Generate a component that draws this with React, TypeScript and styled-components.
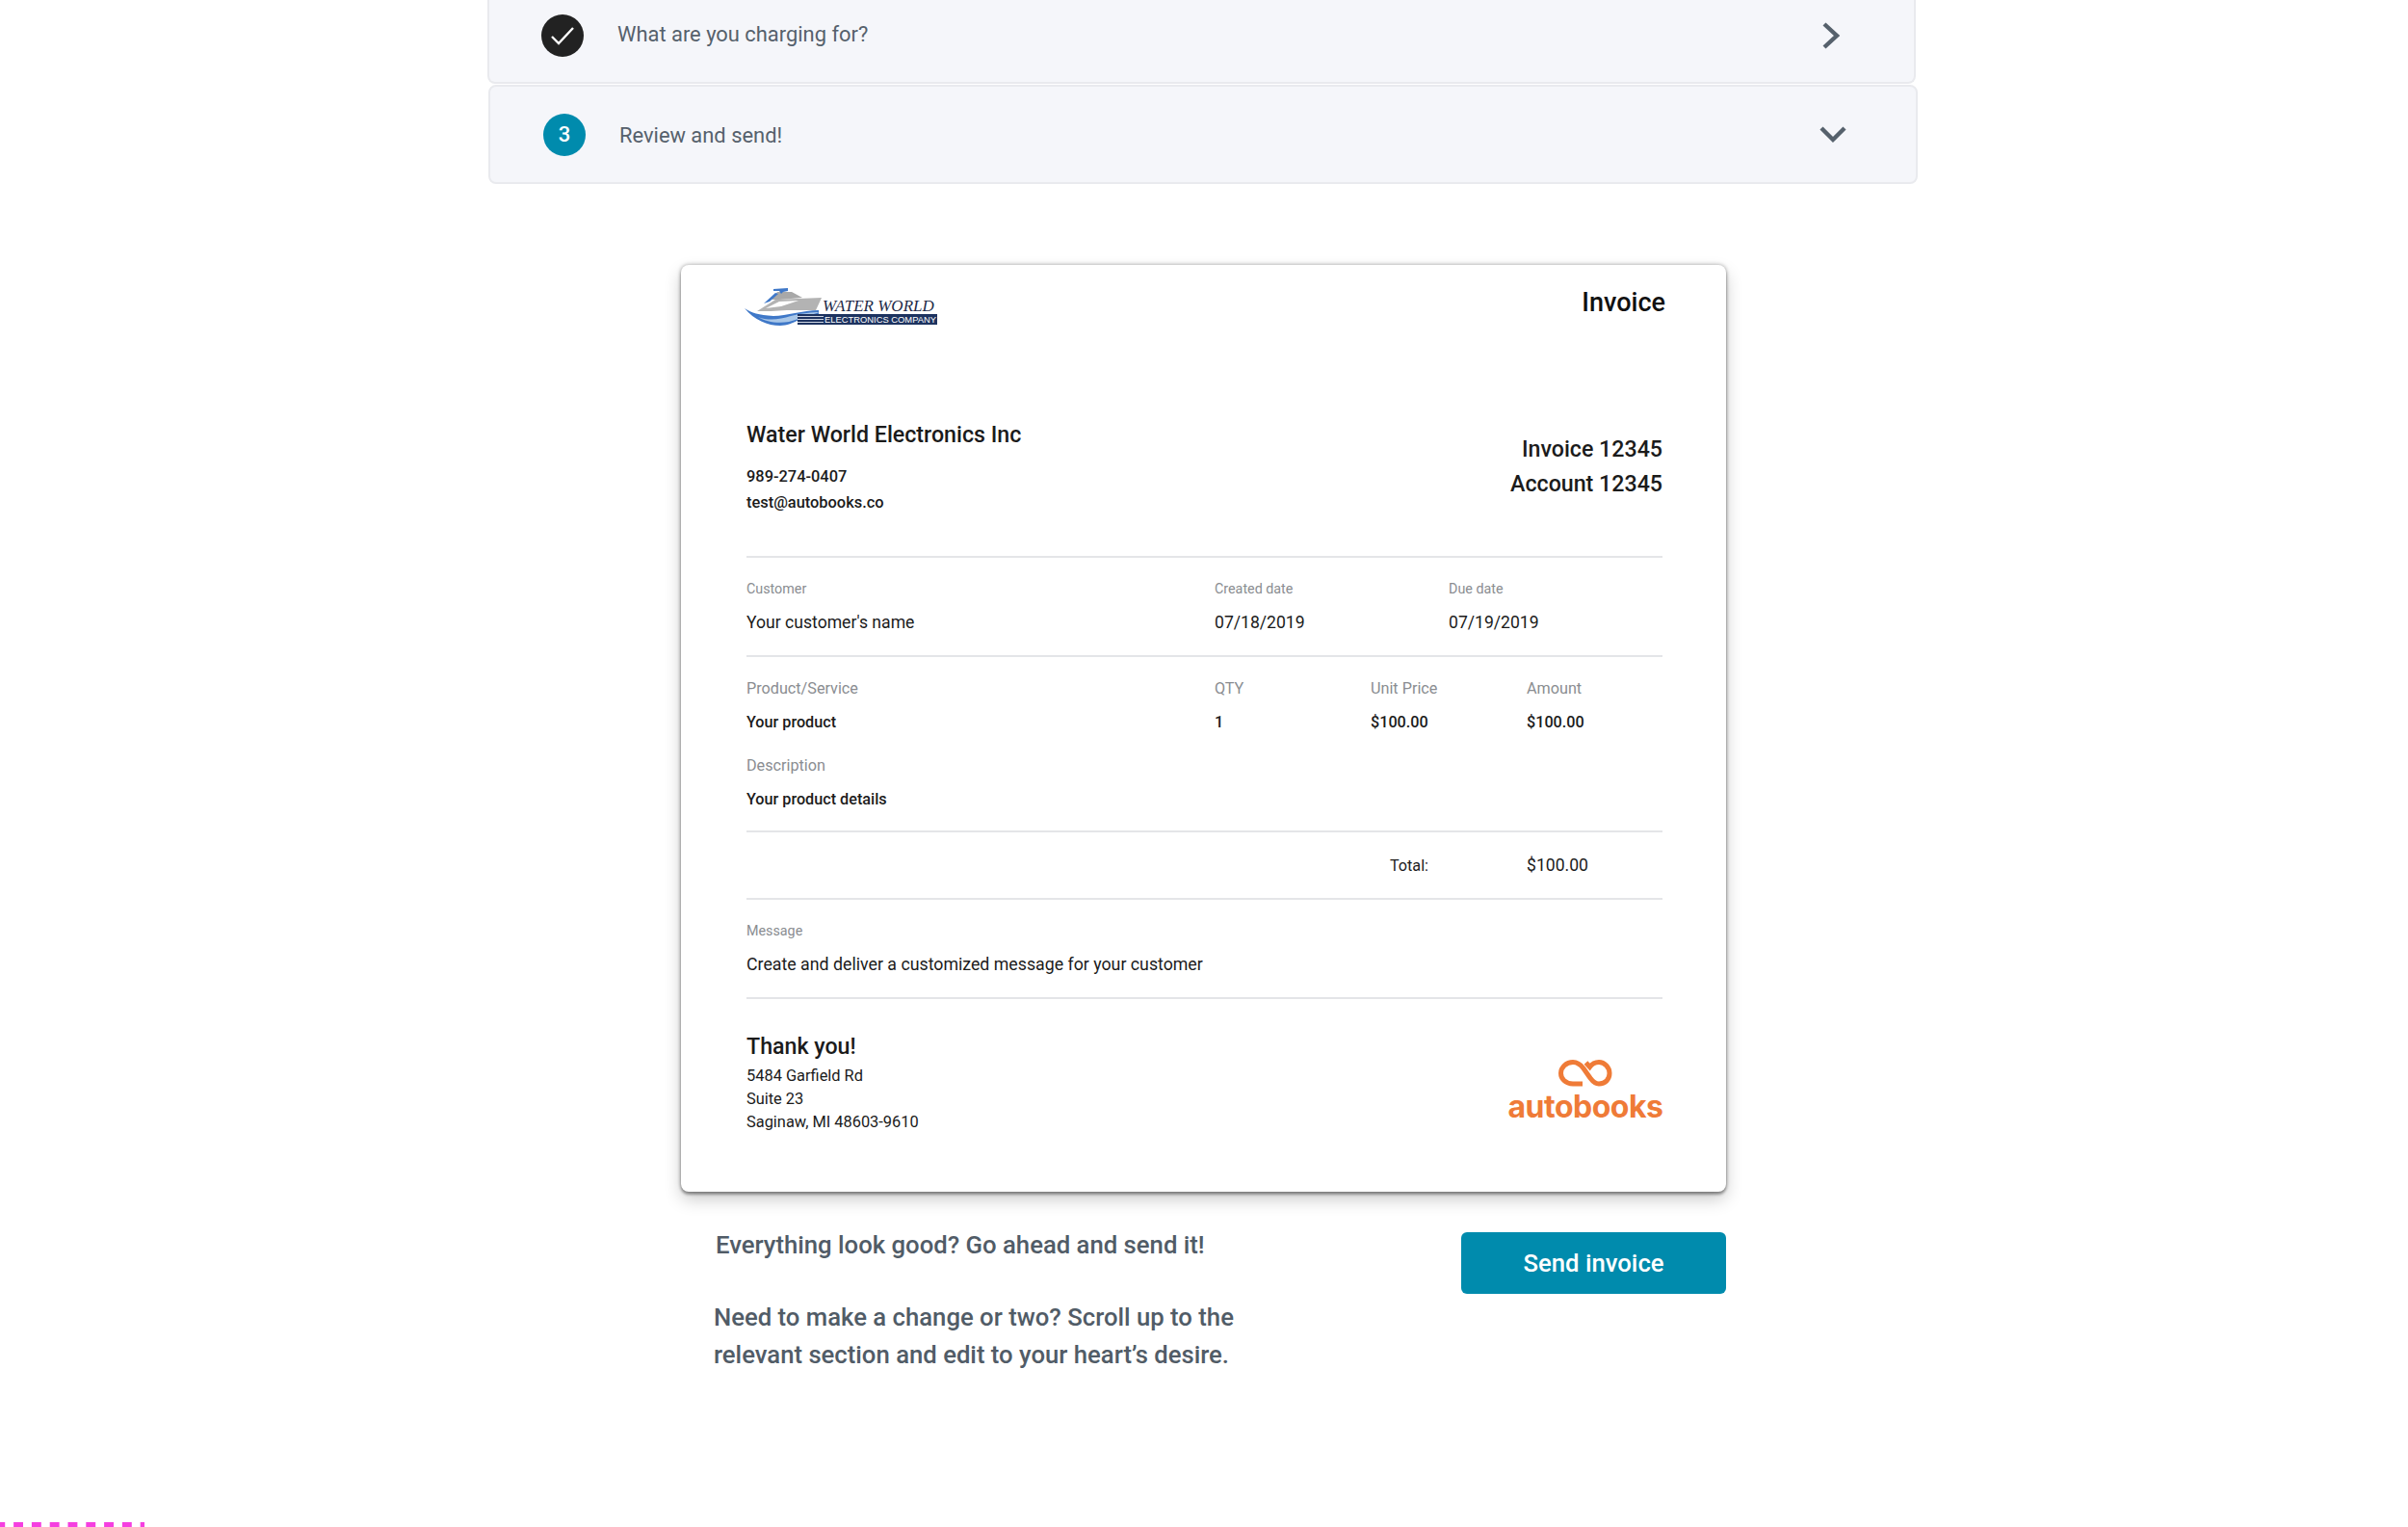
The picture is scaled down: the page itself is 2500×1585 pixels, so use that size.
import React from "react";
import styled, { createGlobalStyle } from "styled-components";

const Global = createGlobalStyle`
  html, body { margin: 0; padding: 0; background: #fff; }
  body { font-family: Roboto, "Liberation Sans", sans-serif; }
  #root { width: 2500px; height: 1585px; overflow: hidden; }
`;

const Page = styled.div`
  position: relative;
  width: 2500px;
  height: 1585px;
  overflow: hidden;
  background: #fff;
`;

const Steps = styled.div`
  display: flex;
  flex-direction: column;
  padding-left: 506px;
`;

const StepRow = styled.div<{ $open?: boolean }>`
  box-sizing: border-box;
  display: flex;
  align-items: center;
  background: #f5f6fa;
  border: 2px solid #e9eaee;
  color: #56616c;
  font-size: 21.9px;
  ${(p) =>
    p.$open
      ? `margin: 1px 0 0 1px; width: 1484px; height: 103px; padding: 0 0 0 55px; border-radius: 8px;`
      : `width: 1483px; height: 87px; padding: 0 0 12px 54px; border-top: none; border-radius: 0 0 8px 8px;`}
`;

const StepBadge = styled.div<{ $done?: boolean }>`
  width: 44px;
  height: 44px;
  border-radius: 50%;
  flex: none;
  display: flex;
  align-items: center;
  justify-content: center;
  background: ${(p) => (p.$done ? "#222222" : "#008bad")};
  color: #fff;
  font-size: 22px;
  font-weight: 500;
`;

const StepTitle = styled.div<{ $nudge: number }>`
  margin: ${(p) => p.$nudge}px 0 0 35px;
  flex: 1;
`;

const Chevron = styled.svg<{ $right: number }>`
  flex: none;
  margin-right: ${(p) => p.$right}px;
`;

const Card = styled.div`
  box-sizing: border-box;
  width: 1085px;
  height: 962px;
  margin: 84px 0 0 707px;
  padding: 0 66px 0 68px;
  background: #fff;
  border-radius: 8px;
  box-shadow: 0 3px 3px rgba(0, 0, 0, 0.3), 0 8px 18px rgba(0, 0, 0, 0.2), 0 0 4px rgba(0, 0, 0, 0.36);
  color: #1b1b1b;
`;

const TopBar = styled.div`
  display: flex;
  justify-content: space-between;
  align-items: flex-start;
  height: 161px;
`;

const LogoSvg = styled.svg`
  margin: 23px 0 0 -2px;
  display: block;
`;

const DocTitle = styled.div`
  margin: 22px -3px 0 0;
  font-size: 27px;
  line-height: 34px;
  font-weight: 500;
  color: #111;
`;

const Header = styled.div`
  display: flex;
  justify-content: space-between;
  height: 141px;
  border-bottom: 2px solid #e4e5e8;
`;

const Company = styled.div`
  display: flex;
  flex-direction: column;
`;

const CompanyName = styled.div`
  font-size: 23.2px;
  line-height: 30px;
  font-weight: 500;
  margin-bottom: 15px;
`;

const ContactLine = styled.div`
  font-size: 16.4px;
  line-height: 27px;
  font-weight: 500;
`;

const Refs = styled.div`
  padding-top: 12px;
  text-align: right;
  font-size: 23.2px;
  line-height: 36px;
  font-weight: 500;
`;

const InfoGrid = styled.div`
  display: grid;
  grid-template-columns: 486px 243px 1fr;
  padding-top: 22px;
  box-sizing: border-box;
  border-bottom: 2px solid #e4e5e8;
  height: 103px;
`;

const SmallLabel = styled.div`
  font-size: 14.3px;
  line-height: 20px;
  color: #8a8d91;
`;

const Value = styled.div`
  font-size: 17.6px;
  line-height: 24px;
  margin-top: 13px;
`;

const MessageValue = styled(Value)`
  font-size: 17.75px;
`;

const Lines = styled.div`
  display: grid;
  grid-template-columns: 486px 162px 162px 1fr;
  align-content: start;
  height: 182px;
  box-sizing: border-box;
  padding-top: 22px;
  border-bottom: 2px solid #e4e5e8;
`;

const LineLabel = styled.div`
  font-size: 16.2px;
  line-height: 22px;
  color: #8a8d91;
`;

const LineValue = styled.div`
  font-size: 16.2px;
  line-height: 22px;
  font-weight: 500;
  margin-top: 13px;
`;

const DescBlock = styled.div`
  grid-column: 1 / -1;
  margin-top: 23px;
`;

const TotalRow = styled.div`
  display: grid;
  grid-template-columns: 708px 102px 1fr;
  align-items: center;
  height: 68px;
  border-bottom: 2px solid #e4e5e8;
  font-size: 17.6px;
`;

const TotalLabel = styled.div`
  grid-column: 1;
  text-align: right;
  font-size: 16.2px;
`;

const TotalValue = styled.div`
  grid-column: 3;
`;

const MessageBlock = styled.div`
  box-sizing: border-box;
  height: 103px;
  padding-top: 22px;
  border-bottom: 2px solid #e4e5e8;
`;

const Footer = styled.div`
  display: flex;
  justify-content: space-between;
  align-items: flex-start;
`;

const Thanks = styled.div`
  font-size: 23.2px;
  line-height: 30px;
  font-weight: 500;
  margin: 34px 0 4px;
`;

const AddressLine = styled.div`
  font-size: 16.4px;
  line-height: 24px;
`;

const Brand = styled.div`
  margin: 63px -2px 0 0;
  width: 164px;
  display: flex;
  flex-direction: column;
  align-items: center;
  color: #ef7b37;
`;

const BrandName = styled.div`
  font-family: Inter, Roboto, sans-serif;
  font-weight: 700;
  font-size: 32px;
  line-height: 32px;
  letter-spacing: -0.5px;
  margin-top: 5px;
`;

const Bottom = styled.div`
  display: flex;
  justify-content: space-between;
  align-items: flex-start;
  width: 1051px;
  margin: 42px 0 0 741px;
  color: #515c67;
`;

const Notes = styled.div`
  font-size: 25.7px;
  line-height: 39px;
  font-weight: 500;
`;

const NoteFirst = styled.p`
  margin: -6px 0 36px 2px;
`;

const NoteSecond = styled.p`
  margin: 0;
`;

const SendButton = styled.button`
  width: 275px;
  height: 64px;
  border: none;
  border-radius: 6px;
  background: #008bad;
  color: #fff;
  font-family: Roboto, sans-serif;
  font-size: 25.7px;
  font-weight: 500;
`;

const DashLine = styled.div`
  position: absolute;
  left: 0;
  bottom: 0;
  width: 150px;
  height: 5px;
  background: linear-gradient(90deg, #f53fe0 0 9.5px, transparent 9.5px) -4.7px 0 / 18.8px 100% repeat-x;
`;

const BoatLogo = () => (
  <LogoSvg width="202" height="42" viewBox="0 0 202 42">
    <path d="M0 22 C8 27 14 29 30 30 C44 30 60 24 77 24 L77 28 C66 29 60 32 57 34 C50 37 44 40 37 40 C24 40 10 34 0 22Z" fill="#3f78c8" />
    <path d="M14 31 C24 35 36 34 48 30 C60 27 70 26 78 26 C66 30 56 33 46 36 C34 38 22 36 14 31Z" fill="#a9c7e8" />
    <path d="M13 25 L32 13 L80 11 L74 24 L44 24 C32 25 22 25 13 25Z M22 22 L36 15 L56 14 L38 20Z" fill="#b3b3b3" fillRule="evenodd" />
    <path d="M28 13 L34 5 L49 5 L60 11 L36 13Z" fill="#a8a8a8" />
    <path d="M20 17 L32 6 L35 7 L26 15Z" fill="#3f78c8" />
    <path d="M30 2 L45 1 L45 4 L40 5 L38 7 L36 4 L30 4Z" fill="#3f78c8" />
    <rect x="55" y="28" width="145" height="11" fill="#1d3360" />
    <rect x="55" y="30" width="27" height="1" fill="#cfd6e2" />
    <rect x="55" y="33" width="27" height="1" fill="#cfd6e2" />
    <rect x="55" y="36" width="27" height="1" fill="#cfd6e2" />
    <text x="83" y="37" fontFamily="Liberation Sans, sans-serif" fontSize="9.4" fill="#fff">ELECTRONICS COMPANY</text>
    <text x="81" y="25" fontFamily="Liberation Serif, serif" fontStyle="italic" fontSize="17" fill="#1d2a48">WATER WORLD</text>
  </LogoSvg>
);

const BrandMark = () => (
  <svg width="56" height="28" viewBox="0 0 56 28" fill="none" stroke="#ef7b37" strokeWidth="5">
    <path d="M25 25 L15 25 C7 25 2.5 19.5 2.5 14 C2.5 8 8 2.5 15 2.5 C20 2.5 23 5 26 9 L33 19 C36 23 39 25 42 25 C49 25 53 20 53 14 C53 8 48 2.5 42 2.5 C38 2.5 35 4 32.5 7.5 L28.5 3" />
  </svg>
);

export default function App() {
  return (
    <Page>
      <Global />
      <Steps>
        <StepRow>
          <StepBadge $done>
            <svg width="26" height="22" viewBox="0 0 26 22" fill="none" stroke="#fff" strokeWidth="2.4">
              <path d="M2 12 L9 19 L24 3" />
            </svg>
          </StepBadge>
          <StepTitle $nudge={-2}>What are you charging for?</StepTitle>
          <Chevron $right={76} width="20" height="30" viewBox="0 0 20 30" fill="none" stroke="#56616c" strokeWidth="4.4">
            <path d="M3 3 L16 15 L3 27" />
          </Chevron>
        </StepRow>
        <StepRow $open>
          <StepBadge>3</StepBadge>
          <StepTitle $nudge={1}>Review and send!</StepTitle>
          <Chevron $right={71} width="30" height="20" viewBox="0 0 30 20" fill="none" stroke="#56616c" strokeWidth="4.4">
            <path d="M3 3 L15 15 L27 3" />
          </Chevron>
        </StepRow>
      </Steps>
      <Card>
        <TopBar>
          <BoatLogo />
          <DocTitle>Invoice</DocTitle>
        </TopBar>
        <Header>
          <Company>
            <CompanyName>Water World Electronics Inc</CompanyName>
            <ContactLine>989-274-0407</ContactLine>
            <ContactLine>test@autobooks.co</ContactLine>
          </Company>
          <Refs>
            <div>Invoice 12345</div>
            <div>Account 12345</div>
          </Refs>
        </Header>
        <InfoGrid>
          <div>
            <SmallLabel>Customer</SmallLabel>
            <Value>Your customer's name</Value>
          </div>
          <div>
            <SmallLabel>Created date</SmallLabel>
            <Value>07/18/2019</Value>
          </div>
          <div>
            <SmallLabel>Due date</SmallLabel>
            <Value>07/19/2019</Value>
          </div>
        </InfoGrid>
        <Lines>
          <div>
            <LineLabel>Product/Service</LineLabel>
            <LineValue>Your product</LineValue>
          </div>
          <div>
            <LineLabel>QTY</LineLabel>
            <LineValue>1</LineValue>
          </div>
          <div>
            <LineLabel>Unit Price</LineLabel>
            <LineValue>$100.00</LineValue>
          </div>
          <div>
            <LineLabel>Amount</LineLabel>
            <LineValue>$100.00</LineValue>
          </div>
          <DescBlock>
            <LineLabel>Description</LineLabel>
            <LineValue>Your product details</LineValue>
          </DescBlock>
        </Lines>
        <TotalRow>
          <TotalLabel>Total:</TotalLabel>
          <TotalValue>$100.00</TotalValue>
        </TotalRow>
        <MessageBlock>
          <SmallLabel>Message</SmallLabel>
          <MessageValue>Create and deliver a customized message for your customer</MessageValue>
        </MessageBlock>
        <Footer>
          <div>
            <Thanks>Thank you!</Thanks>
            <AddressLine>5484 Garfield Rd</AddressLine>
            <AddressLine>Suite 23</AddressLine>
            <AddressLine>Saginaw, MI 48603-9610</AddressLine>
          </div>
          <Brand>
            <BrandMark />
            <BrandName>autobooks</BrandName>
          </Brand>
        </Footer>
      </Card>
      <Bottom>
        <Notes>
          <NoteFirst>Everything look good? Go ahead and send it!</NoteFirst>
          <NoteSecond>
            Need to make a change or two? Scroll up to the
            <br />
            relevant section and edit to your heart’s desire.
          </NoteSecond>
        </Notes>
        <SendButton>Send invoice</SendButton>
      </Bottom>
      <DashLine />
    </Page>
  );
}
